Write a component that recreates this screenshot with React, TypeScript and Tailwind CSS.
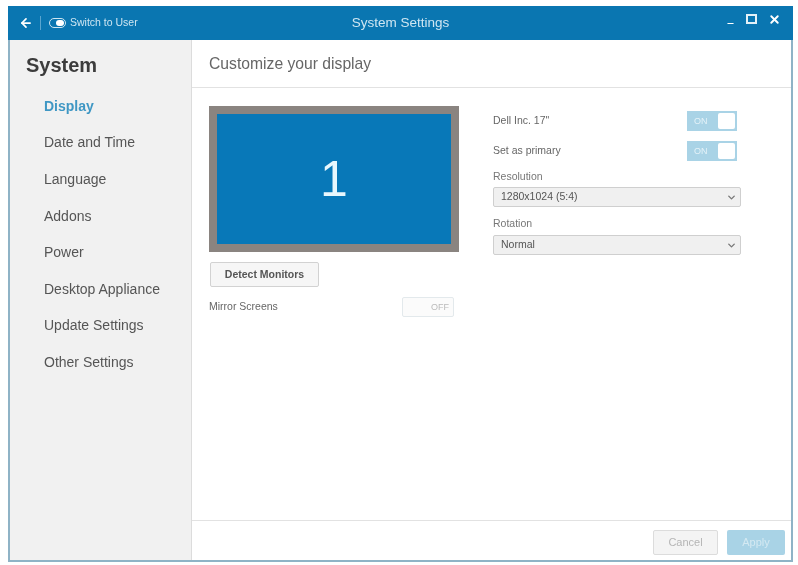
import { ArrowLeft, ChevronDown, Minus, X } from 'lucide-react'

const sections = ['Display', 'Date and Time', 'Language', 'Addons', 'Power', 'Desktop Appliance', 'Update Settings', 'Other Settings']

function OnToggle() {
  return (
    <div className="flex h-[20px] w-[50px] items-center justify-between bg-[#a9d3e6] pl-[7px] pr-[2px]">
      <span className="pt-px text-[9px] text-[#e4f2f8]">ON</span>
      <span className="h-[16px] w-[17px] rounded-[2px] bg-white" />
    </div>
  )
}

function FakeSelect({ value }: { value: string }) {
  return (
    <div className="flex h-[20px] w-[248px] items-center justify-between rounded-[2px] border border-[#cfcfcf] bg-[#f0f0f0] pl-[7px] pr-[3px] text-[10.5px] text-[#555]">
      <span>{value}</span>
      <ChevronDown size={11} strokeWidth={3} className="text-[#777]" />
    </div>
  )
}

export default function App() {
  return (
    <div className="h-[565px] w-[798px] overflow-hidden bg-white pb-[3px] pl-[8px] pr-[5px] pt-[6px] font-['Liberation_Sans',sans-serif] blur-[0.5px]">
      <div className="flex h-full flex-col border-b-2 border-l-2 border-r-2 border-[#8fb3c6]">
        <header className="-mx-[2px] flex h-[34px] shrink-0 items-center bg-[#0a76b1] text-[#cfe6f2]">
          <div className="flex w-[260px] items-center pl-[11px]">
            <ArrowLeft size={14} strokeWidth={3} className="text-white" />
            <span className="ml-[7px] h-[14px] w-px bg-[#5aa5cf]" />
            <span className="ml-[8px] flex h-[10px] w-[17px] items-center justify-end rounded-full border border-[#cfe6f2] pr-px">
              <span className="h-[6px] w-[8px] rounded-full bg-white" />
            </span>
            <span className="ml-[4px] text-[10.5px]">Switch to User</span>
          </div>
          <div className="flex-1 text-center text-[13.5px]">System Settings</div>
          <div className="flex w-[260px] items-center justify-end gap-[11px] pb-[8px] pr-[12px] text-white">
            <Minus size={9} strokeWidth={3} className="mt-[8px]" />
            <span className="h-[10px] w-[11px] border-2 border-[#e3f1f8]" />
            <X size={13} strokeWidth={3.5} />
          </div>
        </header>

        <div className="flex min-h-0 flex-1">
          <aside className="w-[182px] shrink-0 border-r border-[#dcdcdc] bg-[#f1f1f1]">
            <h1 className="pl-[16px] pt-[13px] text-[20px] font-bold leading-[24px] text-[#3c3c3c]">System</h1>
            <nav className="flex flex-col pl-[34px] pt-[11px]">
              {sections.map((s, i) => (
                <div
                  key={s}
                  className={`flex h-[36.6px] items-center text-[14px] ${i === 0 ? 'font-bold text-[#3f97c4]' : 'text-[#555]'}`}
                >
                  {s}
                </div>
              ))}
            </nav>
          </aside>

          <main className="flex min-w-0 flex-1 flex-col bg-white">
            <div className="flex h-[48px] shrink-0 items-center border-b border-[#e2e2e2] pl-[17px] text-[15.7px] text-[#666]">
              Customize your display
            </div>

            <div className="flex flex-1 pl-[17px] pt-[18px]">
              <div className="w-[251px]">
                <div className="flex h-[146px] w-[250px] items-center justify-center border-[8px] border-[#8a8480] bg-[#0878b8] pt-px text-[50px] text-[#e8f7fd]">
                  1
                </div>
                <button className="ml-px mt-[10px] h-[25px] w-[109px] rounded-[2px] border border-[#d2d2d2] bg-[#f6f6f6] text-[10.5px] font-bold text-[#555]">
                  Detect Monitors
                </button>
                <div className="mt-[10px] flex items-center justify-between pr-[6px]">
                  <span className="text-[10.5px] text-[#666]">Mirror Screens</span>
                  <div className="flex h-[20px] w-[52px] items-center justify-end rounded-[2px] border border-[#e3e9ec] bg-[#fbfbfb] pr-[4px] pt-[2px] text-[9px] text-[#bbb]">
                    OFF
                  </div>
                </div>
              </div>

              <div className="ml-[33px] w-[248px] pt-[5px]">
                <div className="flex h-[20px] items-center justify-between pr-[4px]">
                  <span className="text-[10.5px] text-[#666]">Dell Inc. 17"</span>
                  <OnToggle />
                </div>
                <div className="mt-[10px] flex h-[20px] items-center justify-between pr-[4px]">
                  <span className="text-[10.5px] text-[#666]">Set as primary</span>
                  <OnToggle />
                </div>
                <div className="mt-[9px] text-[10.5px] leading-[12px] text-[#777]">Resolution</div>
                <div className="mt-[5px]">
                  <FakeSelect value="1280x1024 (5:4)" />
                </div>
                <div className="mt-[10px] text-[10.5px] leading-[12px] text-[#777]">Rotation</div>
                <div className="mt-[6px]">
                  <FakeSelect value="Normal" />
                </div>
              </div>
            </div>

            <footer className="flex h-[40px] shrink-0 items-start justify-end gap-[9px] border-t border-[#e2e2e2] pr-[6px] pt-[9px]">
              <button className="h-[25px] w-[65px] rounded-[2px] border border-[#dcdcdc] bg-[#f4f4f4] text-[11px] text-[#b5b5b5]">
                Cancel
              </button>
              <button className="h-[25px] w-[58px] rounded-[2px] bg-[#a9d3e6] text-[11px] text-[#d4e9f2]">
                Apply
              </button>
            </footer>
          </main>
        </div>
      </div>
    </div>
  )
}
